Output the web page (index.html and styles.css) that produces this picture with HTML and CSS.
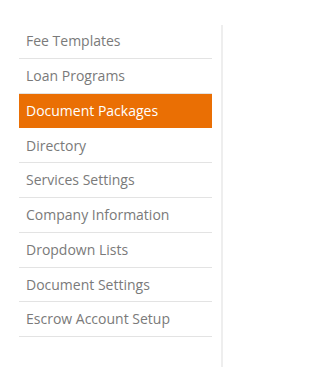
FILE: index.html
```html
<!DOCTYPE html>
<html>
<head>
<meta charset="utf-8">
<link rel="stylesheet" href="styles.css">
</head>
<body>
<div class="page">
  <nav class="sidebar">
    <ul class="menu">
      <li class="item">Fee Templates</li>
      <li class="item">Loan Programs</li>
      <li class="item active">Document Packages</li>
      <li class="item">Directory</li>
      <li class="item">Services Settings</li>
      <li class="item">Company Information</li>
      <li class="item">Dropdown Lists</li>
      <li class="item">Document Settings</li>
      <li class="item">Escrow Account Setup</li>
    </ul>
  </nav>
  <div class="divider"></div>
</div>
</body>
</html>
```

FILE: styles.css
```css
html, body {
  margin: 0;
  padding: 0;
  background: #ffffff;
}
.page {
  display: flex;
  height: 367px;
  padding-top: 24.25px;
  box-sizing: border-box;
  font-family: "Open Sans", "Liberation Sans", sans-serif;
}
.sidebar {
  margin-left: 19px;
  width: 193px;
}
.menu {
  list-style: none;
  margin: 0;
  padding: 0;
}
.item {
  height: 33.75px;
  line-height: 33.75px;
  border-bottom: 1px solid #e3e3e3;
  padding-left: 7px;
  font-size: 14px;
  color: #7a7a7a;
  white-space: nowrap;
}
.item.active {
  background: #ea6f04;
  color: #ffffff;
  border-bottom-color: #ffffff;
}
.divider {
  margin-left: 9px;
  margin-top: 1px;
  width: 2px;
  background: #eeeeee;
}
```
